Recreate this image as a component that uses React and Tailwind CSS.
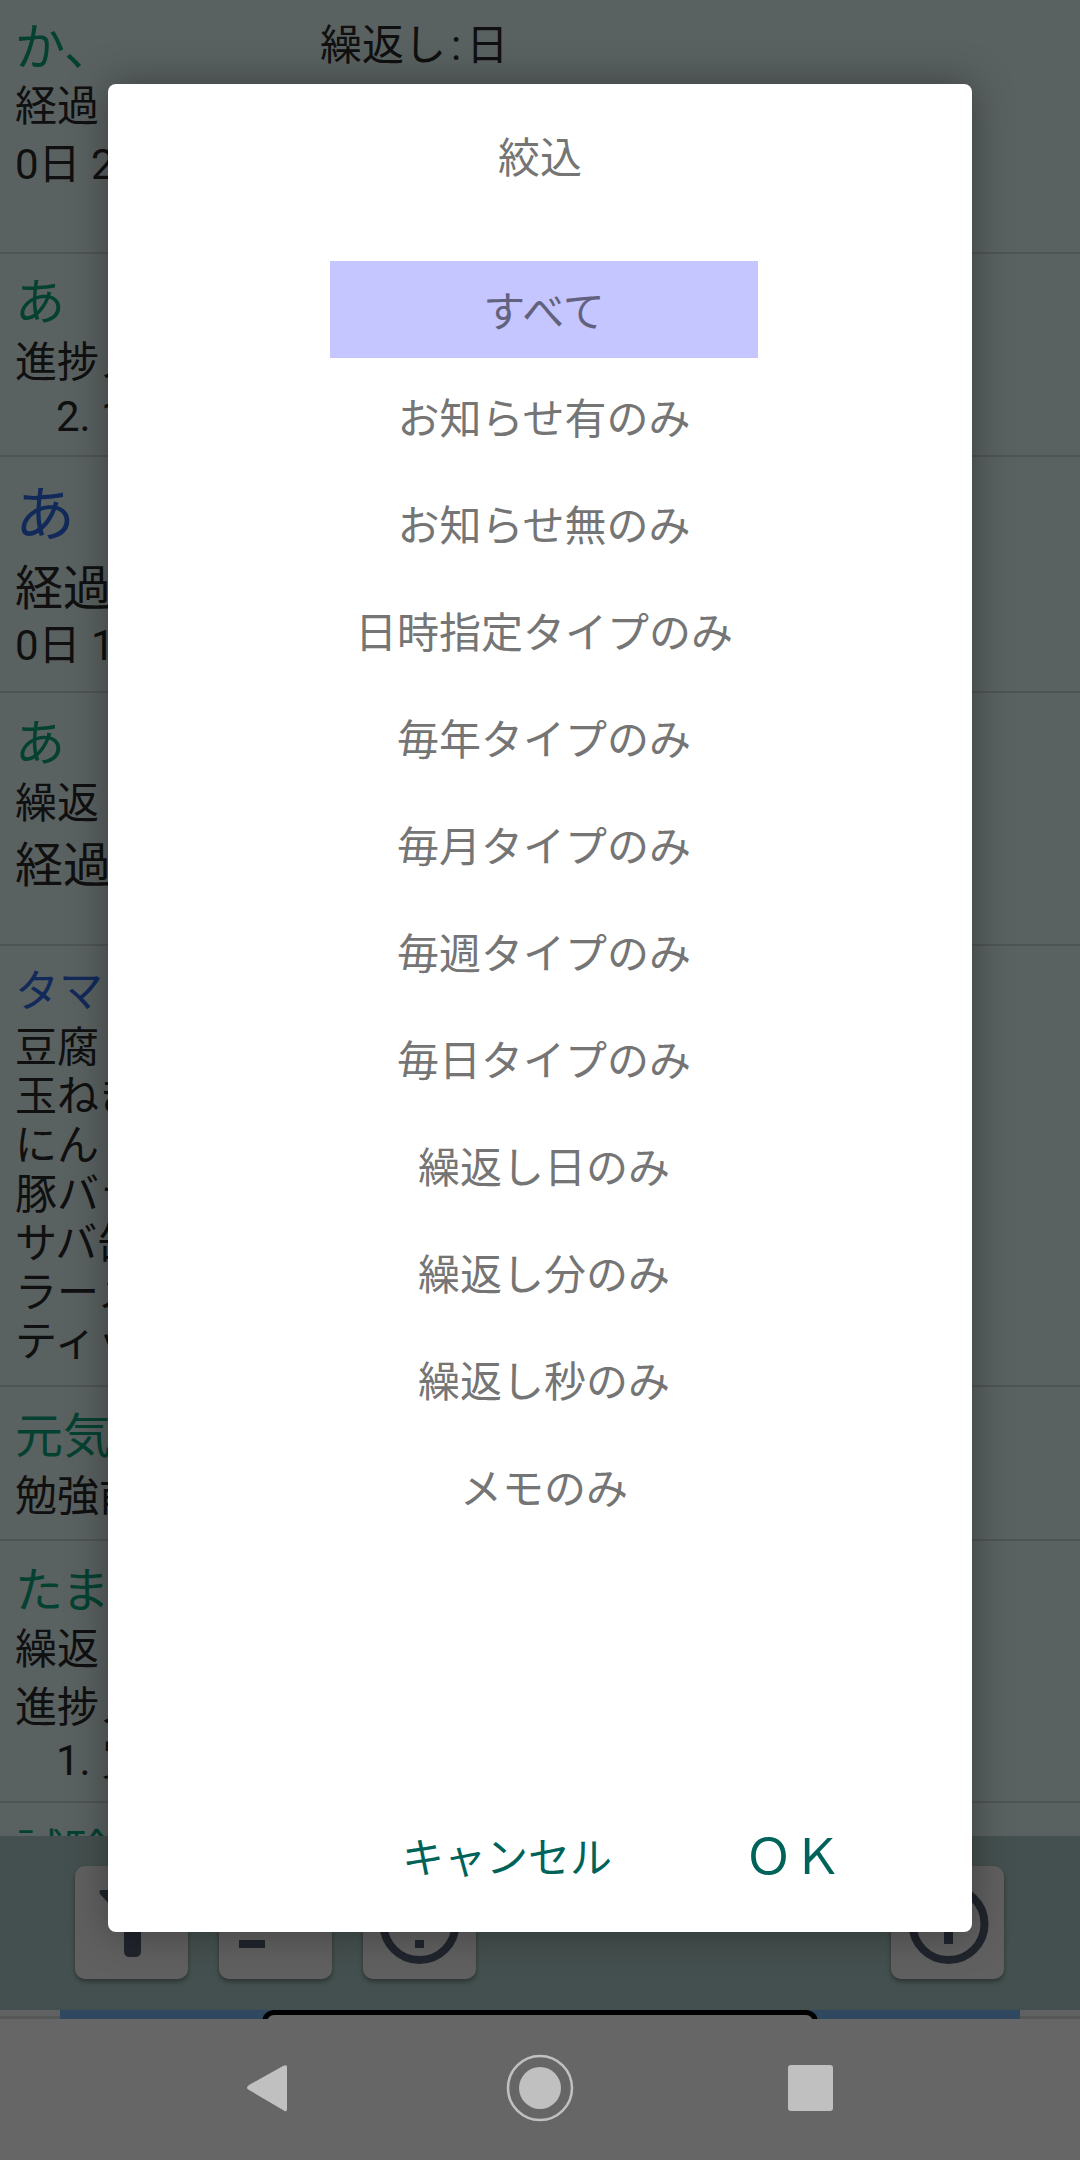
import React from 'react'

const options = [
  'すべて',
  'お知らせ有のみ',
  'お知らせ無のみ',
  '日時指定タイプのみ',
  '毎年タイプのみ',
  '毎月タイプのみ',
  '毎週タイプのみ',
  '毎日タイプのみ',
  '繰返し日のみ',
  '繰返し分のみ',
  '繰返し秒のみ',
  'メモのみ',
]

const Divider = () => <div className='h-[2px] bg-[#c3d2d2]'></div>

const App = () => {
  return (
    <div className="relative h-[2160px] w-[1080px] overflow-hidden bg-[#e1f2f2] font-['Roboto','Noto_Sans_CJK_JP',sans-serif] text-[42px] text-[#2a2a2a] whitespace-nowrap">
      <div className='flex h-full flex-col'>
        {/* list behind the dialog */}
        <div className='h-[1836px] overflow-hidden'>
          <div className='flex h-[252px] pl-[15px] pt-[18px]'>
            <div className='w-[305px]'>
              <div className='text-[50px] leading-[60px] text-[#0ea47a]'>か、</div>
              <div className='leading-[58px]'>経過</div>
              <div className='leading-[58px]'>0日 2時間</div>
            </div>
            <div>
              <div className='leading-[56px]'>繰返し<span className='mx-[5px]'>:</span>日</div>
              <div className='mt-[6px] leading-[56px]'>経過</div>
            </div>
          </div>
          <Divider />
          <div className='h-[201px] pl-[15px] pt-[19px]'>
            <div className='text-[50px] leading-[60px] text-[#0ea47a]'>あ</div>
            <div className='leading-[59px]'>進捗メモ</div>
            <div className='pl-[41px] leading-[50px]'>2. 1</div>
          </div>
          <Divider />
          <div className='h-[234px] pl-[15px] pt-[24px]'>
            <div className='text-[60px] leading-[70px] text-[#2f6ae0]'>あ</div>
            <div className='text-[48px] leading-[76px]'>経過時間</div>
            <div className='leading-[38px]'>0日 1時間</div>
          </div>
          <Divider />
          <div className='h-[251px] pl-[15px] pt-[21px]'>
            <div className='text-[50px] leading-[60px] text-[#0ea47a]'>あ</div>
            <div className='leading-[60px]'>繰返し</div>
            <div className='text-[48px] leading-[64px]'>経過時間</div>
          </div>
          <Divider />
          <div className='h-[439px] pl-[15px] pt-[20px]'>
            <div className='mb-[5px] text-[44px] leading-[52px] text-[#2f6ae0]'>タマゴ</div>
            <div className='leading-[49px]'>豆腐</div>
            <div className='leading-[49px]'>玉ねぎ</div>
            <div className='leading-[49px]'>にんじん</div>
            <div className='leading-[49px]'>豚バラ</div>
            <div className='leading-[49px]'>サバ缶</div>
            <div className='leading-[49px]'>ラーメン</div>
            <div className='leading-[49px]'>ティッシュ</div>
          </div>
          <Divider />
          <div className='h-[152px] pl-[15px] pt-[20px]'>
            <div className='text-[48px] leading-[60px] text-[#0ea47a]'>元気</div>
            <div className='leading-[60px]'>勉強前</div>
          </div>
          <Divider />
          <div className='h-[260px] pl-[15px] pt-[20px]'>
            <div className='text-[48px] leading-[60px] text-[#0ea47a]'>たまご</div>
            <div className='leading-[58px]'>繰返し</div>
            <div className='leading-[58px]'>進捗メモ</div>
            <div className='pl-[41px] leading-[48px]'>1. 買</div>
          </div>
          <Divider />
          <div className='pl-[15px] pt-[20px]'>
            <div className='text-[48px] leading-[60px] text-[#0ea47a]'>試験</div>
          </div>
        </div>

        {/* bottom toolbar */}
        <div className='flex h-[174px] gap-[31px] bg-[#aac9c6] pl-[75px] pr-[76px] pt-[30px]'>
          <div className='h-[113px] w-[113px] rounded-[10px] bg-[#efefef] shadow-[0_3px_5px_rgba(0,0,0,0.35)]'>
            <svg viewBox='0 0 113 113' className='h-full w-full'>
              <path d='M27 24H86Q90 24 88 28L66 54V85Q66 91 60 91H55Q49 91 49 85V54L25 28Q23 24 27 24Z' fill='#505a6e' />
            </svg>
          </div>
          <div className='h-[113px] w-[113px] rounded-[10px] bg-[#efefef] shadow-[0_3px_5px_rgba(0,0,0,0.35)]'>
            <svg viewBox='0 0 113 113' className='h-full w-full'>
              <rect x='20' y='74' width='26' height='8' fill='#505a6e' />
            </svg>
          </div>
          <div className='h-[113px] w-[113px] rounded-[10px] bg-[#efefef] shadow-[0_3px_5px_rgba(0,0,0,0.35)]'>
            <svg viewBox='0 0 113 113' className='h-full w-full'>
              <circle cx='56.5' cy='58' r='36' fill='none' stroke='#505a6e' strokeWidth='8' />
              <rect x='52' y='30' width='9' height='34' fill='#505a6e' />
              <rect x='52' y='74' width='9' height='8' fill='#505a6e' />
            </svg>
          </div>
          <div className='ml-auto h-[113px] w-[113px] rounded-[10px] bg-[#efefef] shadow-[0_3px_5px_rgba(0,0,0,0.35)]'>
            <svg viewBox='0 0 113 113' className='h-full w-full'>
              <circle cx='57.5' cy='58' r='36' fill='none' stroke='#505a6e' strokeWidth='8' />
              <rect x='53' y='40' width='9' height='38' fill='#505a6e' />
            </svg>
          </div>
        </div>

        {/* ad strip, cut off by the nav bar */}
        <div className='flex h-[9px]'>
          <div className='w-[60px] border-b-[3px] border-[#d8dcda] bg-[#eef4f1]'></div>
          <div className='flex flex-1 justify-center bg-[#75b4f0]'>
            <div className='h-[14px] w-[556px] rounded-t-[12px] border-x-[5px] border-t-[5px] border-black bg-white'></div>
          </div>
          <div className='w-[60px] border-b-[3px] border-[#d8dcda] bg-[#eef4f1]'></div>
        </div>

        {/* nav bar sits above the scrim */}
        <div className='relative z-10 flex h-[141px] bg-[#666666]'>
          <svg viewBox='0 0 1080 141' className='h-full w-full'>
            <path d='M287 48V90Q287 94 283 91L249 71Q245 69 249 66L283 47Q287 45 287 48Z' fill='#c0c0c0' />
            <circle cx='540' cy='69' r='32' fill='none' stroke='#c0c0c0' strokeWidth='2.5' />
            <circle cx='540' cy='69' r='21' fill='#c0c0c0' />
            <rect x='788' y='46' width='45' height='46' rx='3' fill='#c0c0c0' />
          </svg>
        </div>
      </div>

      {/* scrim */}
      <div className='absolute inset-0 bg-black/60'></div>

      {/* dialog */}
      <div className='absolute left-[108px] top-[84px] z-20 flex h-[1848px] w-[864px] flex-col rounded-lg bg-white text-[#757575] shadow-[0_0_40px_rgba(0,0,0,0.35)]'>
        <div className='mb-[29px] flex h-[148px] items-center justify-center'>絞込</div>
        <div className='ml-[8px] flex flex-col items-center gap-[10px]'>
          {options.map((o, i) => (
            <div
              key={o}
              className={i === 0
                ? 'flex h-[97px] w-[428px] items-center justify-center bg-[#c5c5ff] pt-[5px] text-[#62627e]'
                : 'flex h-[97px] w-[428px] items-center justify-center pt-[5px]'}
            >
              {o}
            </div>
          ))}
        </div>
        <div className='mt-auto flex h-[150px] items-center justify-end gap-[132px] pr-[130px] pt-[2px] text-[#00635a]'>
          <button>キャンセル</button>
          <button className='text-[49px]'>ＯＫ</button>
        </div>
      </div>
    </div>
  )
}

export default App
